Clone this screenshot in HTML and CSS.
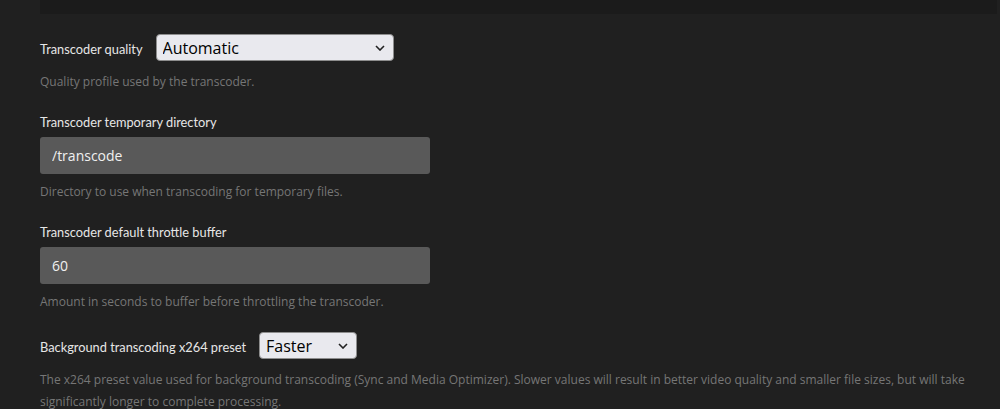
FILE: index.html
```html
<!DOCTYPE html>
<html lang="en">
<head>
    <meta charset="UTF-8">
    <title>Transcoder settings</title>
    <link rel="stylesheet" href="styles.css">
</head>
<body>
    <div class="page">
        <div class="top-strip"></div>

        <div class="setting">
            <div class="inline-row">
                <label class="setting-label" for="quality">Transcoder quality</label>
                <div class="select-wrap">
                    <select id="quality" class="select select-wide">
                        <option>Automatic</option>
                    </select>
                    <svg class="chevron" width="10" height="6" viewBox="0 0 10 6"><path d="M1 1l4 4 4-4" fill="none" stroke="#222" stroke-width="1.6"/></svg>
                </div>
            </div>
            <p class="help">Quality profile used by the transcoder.</p>
        </div>

        <div class="setting">
            <label class="setting-label" for="tmpdir">Transcoder temporary directory</label>
            <input id="tmpdir" class="text-input" type="text" value="/transcode">
            <p class="help">Directory to use when transcoding for temporary files.</p>
        </div>

        <div class="setting setting-tight">
            <label class="setting-label" for="buffer">Transcoder default throttle buffer</label>
            <input id="buffer" class="text-input" type="text" value="60">
            <p class="help">Amount in seconds to buffer before throttling the transcoder.</p>
        </div>

        <div class="setting">
            <div class="inline-row">
                <label class="setting-label" for="preset">Background transcoding x264 preset</label>
                <div class="select-wrap">
                    <select id="preset" class="select select-small">
                        <option>Faster</option>
                    </select>
                    <svg class="chevron" width="10" height="6" viewBox="0 0 10 6"><path d="M1 1l4 4 4-4" fill="none" stroke="#222" stroke-width="1.6"/></svg>
                </div>
            </div>
            <p class="help help-long">The x264 preset value used for background transcoding (Sync and Media Optimizer). Slower values will result in better video quality and smaller file sizes, but will take significantly longer to complete processing.</p>
        </div>
    </div>
</body>
</html>
```

FILE: styles.css
```css
* {
    margin: 0;
    padding: 0;
    box-sizing: border-box;
}

body {
    background: #202020;
    font-family: 'Open Sans', 'Noto Sans', sans-serif;
    color: #e2e2e2;
    overflow: hidden;
}

.page {
    padding: 0 3px 0 40px;
}

.top-strip {
    height: 14px;
    background: #1b1b1b;
    margin-bottom: 20px;
}

.setting {
    margin-bottom: 20px;
}

.setting-tight {
    margin-bottom: 19px;
}

.setting-label {
    display: block;
    font-family: 'Lato', sans-serif;
    font-size: 12.8px;
    line-height: 18px;
    color: #e6e6e6;
    margin-bottom: 6px;
}

.inline-row {
    display: flex;
    align-items: center;
    gap: 13px;
}

.inline-row .setting-label {
    margin-bottom: 0;
    padding-top: 3px;
}

.select-wrap {
    position: relative;
}

.select {
    display: block;
    appearance: none;
    -webkit-appearance: none;
    height: 27px;
    background: #e9e9ee;
    border: 1px solid #8d8d8d;
    border-radius: 4px;
    font-family: 'Open Sans', sans-serif;
    font-size: 16px;
    color: #000;
    padding: 0 6px;
    outline: none;
}

.chevron {
    position: absolute;
    right: 9px;
    top: 11px;
    pointer-events: none;
}

.select-wide {
    width: 238px;
}

.select-small {
    width: 98px;
}

.text-input {
    display: block;
    width: 390px;
    height: 37px;
    background: #595959;
    border: none;
    border-radius: 3px;
    padding: 0 12px;
    font-family: 'Open Sans', sans-serif;
    font-size: 14px;
    color: #f0f0f0;
    outline: none;
}

.help {
    font-size: 12px;
    line-height: 22px;
    color: #767676;
    margin-top: 7px;
}

.inline-row + .help {
    margin-top: 10px;
}

.help-long {
    margin-top: 8px;
}
```
